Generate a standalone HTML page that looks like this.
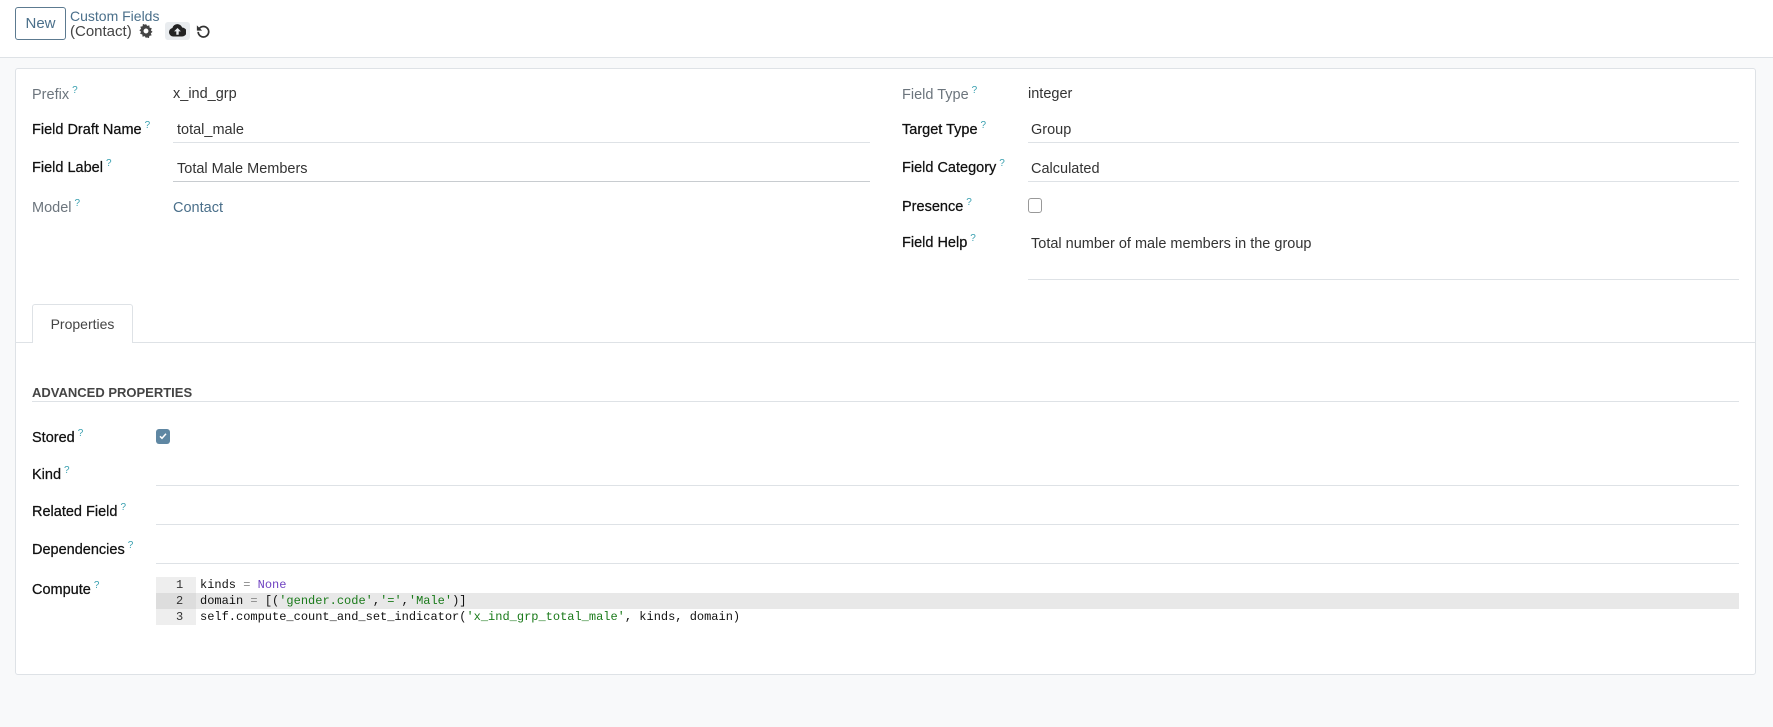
<!DOCTYPE html>
<html><head><meta charset="utf-8"><style>
*{box-sizing:border-box;margin:0;padding:0}
body{width:1773px;height:727px;background:#f8f9fa;font-family:"Liberation Sans",sans-serif;font-size:14px;color:#212529;position:relative;overflow:hidden}
.hdr{position:absolute;left:0;top:0;width:1773px;height:58px;background:#fff;border-bottom:1px solid #dee2e6}
.abs{position:absolute;white-space:nowrap}
.card{position:absolute;left:15px;top:68px;width:1741px;height:607px;background:#fff;border:1px solid #dee2e6;border-radius:3px}
.lbl{position:absolute;white-space:nowrap;font-size:14.5px;color:#111;-webkit-text-stroke:0.25px #111}
.lbl.m{color:#6c757d;-webkit-text-stroke:0}
.lbl sup{color:#3aa0b0;font-size:10px;margin-left:3px;vertical-align:6px;-webkit-text-stroke:0}
.val{position:absolute;white-space:nowrap;font-size:14.5px;color:#333}
.ln{position:absolute;height:1px;background:#dee2e6}
.code{position:absolute;font-family:"Liberation Mono",monospace;font-size:12px;line-height:16px;white-space:pre}
</style></head><body>
<div class="hdr"></div>
<div class="abs" style="left:15px;top:7px;width:51px;height:33px;border:1px solid #5c7a90;border-radius:3px;color:#4a6f8a;font-size:15px;line-height:31px;text-align:center">New</div>
<div class="abs" style="left:70px;top:8px;color:#4a6f8a;font-size:14px">Custom Fields</div>
<div class="abs" style="left:70px;top:23px;color:#444;font-size:15px">(Contact)</div>
<svg class="abs" style="left:139px;top:24px" width="14" height="14" viewBox="0 0 16 16"><path fill="#444" d="M8 0l1.3 2.2 2.5-.7.3 2.6 2.5.8-1 2.4 1.9 1.7-2 1.6.9 2.4-2.6.6-.4 2.6-2.4-.9L7.9 16 6.6 13.8l-2.5.8-.3-2.6-2.5-.8 1-2.4L.4 7.1l2-1.6-.9-2.4 2.6-.6.4-2.6 2.4.9z M8 5.2a2.8 2.8 0 1 0 0 5.6 2.8 2.8 0 1 0 0-5.6z" fill-rule="evenodd"/></svg>
<div class="abs" style="left:165px;top:22px;width:25px;height:18px;background:#e9ecef;border-radius:3px"></div>
<svg class="abs" style="left:169px;top:24px" width="17" height="13" viewBox="0 0 20 14"><path fill="#222" d="M5 14a5 5 0 0 1-1-9.9A6 6 0 0 1 15.5 3.5 4.5 4.5 0 0 1 15.5 14z"/><path fill="#e9ecef" d="M10 4l-4 4h2.6v4h2.8V8H14z"/></svg>
<svg class="abs" style="left:196px;top:24px" width="14" height="14" viewBox="0 0 16 16"><path fill="none" stroke="#333" stroke-width="2" d="M3.5 5.5A6 6 0 1 1 2.5 9"/><path fill="#333" d="M1 1.5v6h6z"/></svg>

<div class="card"></div>
<div class="lbl m" style="left:32px;top:85px">Prefix<sup>?</sup></div>
<div class="val" style="left:173px;top:86px">x_ind_grp</div>
<div class="lbl" style="left:32px;top:120px">Field Draft Name<sup>?</sup></div>
<div class="val" style="left:177px;top:122px">total_male</div>
<div class="ln" style="left:173px;top:142px;width:697px"></div>
<div class="lbl" style="left:32px;top:158px">Field Label<sup>?</sup></div>
<div class="val" style="left:177px;top:161px">Total Male Members</div>
<div class="ln" style="left:173px;top:181px;width:697px;background:#c8ccd0"></div>
<div class="lbl m" style="left:32px;top:198px">Model<sup>?</sup></div>
<div class="val" style="left:173px;top:200px;color:#4a6f8a">Contact</div>

<div class="lbl m" style="left:902px;top:85px">Field Type<sup>?</sup></div>
<div class="val" style="left:1028px;top:86px">integer</div>
<div class="lbl" style="left:902px;top:120px">Target Type<sup>?</sup></div>
<div class="val" style="left:1031px;top:122px">Group</div>
<div class="ln" style="left:1028px;top:142px;width:711px"></div>
<div class="lbl" style="left:902px;top:158px">Field Category<sup>?</sup></div>
<div class="val" style="left:1031px;top:161px">Calculated</div>
<div class="ln" style="left:1028px;top:181px;width:711px"></div>
<div class="lbl" style="left:902px;top:197px">Presence<sup>?</sup></div>
<div class="abs" style="left:1028px;top:198px;width:14px;height:15px;border:1px solid #999;border-radius:3px"></div>
<div class="lbl" style="left:902px;top:233px">Field Help<sup>?</sup></div>
<div class="val" style="left:1031px;top:236px">Total number of male members in the group</div>
<div class="ln" style="left:1028px;top:279px;width:711px"></div>

<div class="ln" style="left:16px;top:342px;width:1739px"></div>
<div class="abs" style="left:32px;top:304px;width:101px;height:39px;background:#fff;border:1px solid #dee2e6;border-bottom:none;border-radius:3px 3px 0 0;text-align:center;line-height:38px;font-size:14px;color:#444">Properties</div>

<div class="abs" style="left:32px;top:385px;font-size:13px;font-weight:bold;color:#444">ADVANCED PROPERTIES</div>
<div class="ln" style="left:32px;top:401px;width:1707px"></div>
<div class="lbl" style="left:32px;top:428px">Stored<sup>?</sup></div>
<div class="abs" style="left:156px;top:429px;width:14px;height:15px;background:#5f87a3;border-radius:3px"></div>
<svg class="abs" style="left:158px;top:431px" width="10" height="10" viewBox="0 0 10 10"><path d="M2 5.3l2 2 4-4.5" fill="none" stroke="#fff" stroke-width="1.5"/></svg>
<div class="lbl" style="left:32px;top:465px">Kind<sup>?</sup></div>
<div class="ln" style="left:156px;top:485px;width:1583px"></div>
<div class="lbl" style="left:32px;top:502px">Related Field<sup>?</sup></div>
<div class="ln" style="left:156px;top:524px;width:1583px"></div>
<div class="lbl" style="left:32px;top:540px">Dependencies<sup>?</sup></div>
<div class="ln" style="left:156px;top:563px;width:1583px"></div>
<div class="lbl" style="left:32px;top:580px">Compute<sup>?</sup></div>
<div class="abs" style="left:156px;top:577px;width:40px;height:48px;background:#eee"></div>
<div class="abs" style="left:156px;top:593px;width:1583px;height:16px;background:#e8e8e8"></div>
<div class="abs" style="left:156px;top:593px;width:40px;height:16px;background:#ddd"></div>
<div class="code" style="left:176px;top:577px;color:#333">1
2
3</div>
<div class="code" style="left:200px;top:577px;color:#111">kinds <span style="color:#888">=</span> <span style="color:#6f42c1">None</span>
domain <span style="color:#888">=</span> [(<span style="color:#1a7a1a">'gender.code'</span>,<span style="color:#1a7a1a">'='</span>,<span style="color:#1a7a1a">'Male'</span>)]
self.compute_count_and_set_indicator(<span style="color:#1a7a1a">'x_ind_grp_total_male'</span>, kinds, domain)</div>
</body></html>
